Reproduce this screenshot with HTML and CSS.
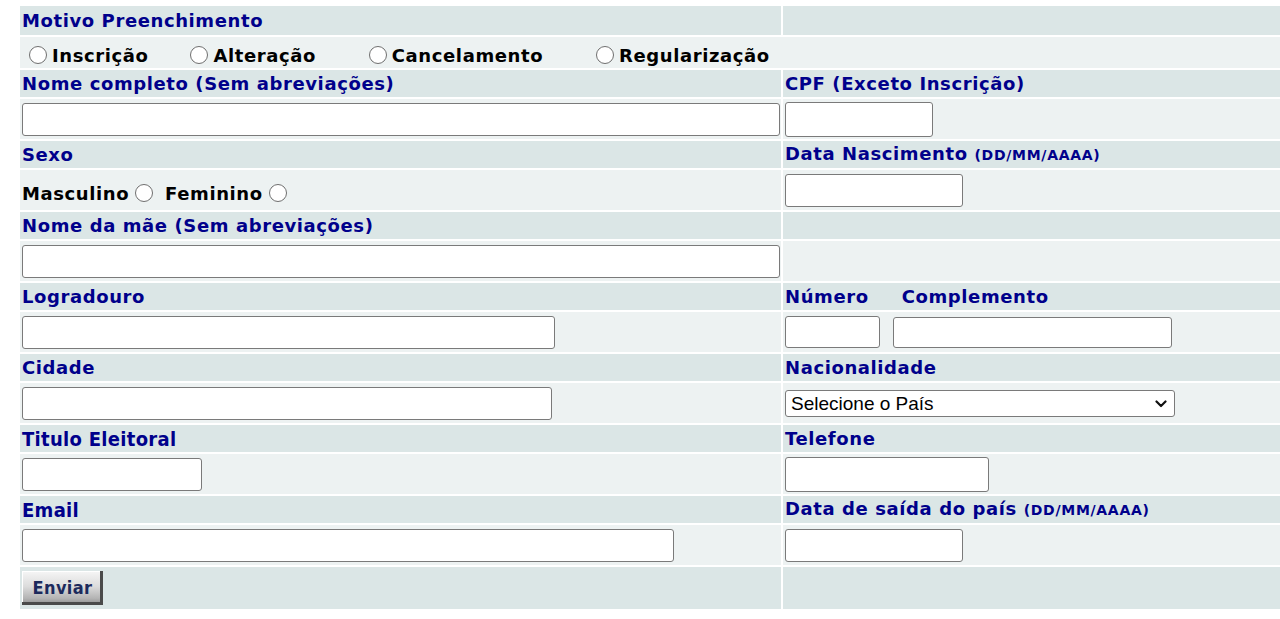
FILE: index.html
```html
<!DOCTYPE html>
<html lang="pt-BR">
<head>
<meta charset="utf-8">
<title>Motivo Preenchimento</title>
<link rel="stylesheet" href="styles.css">
</head>
<body>
<form class="cadastro">
<table class="form-table">
    <tr class="head first">
        <td class="left">Motivo Preenchimento</td>
        <td></td>
    </tr>
    <tr class="field motivo">
        <td colspan="2">
            <label class="opt"><input type="radio" name="motivo" value="inscricao">Inscrição</label>
            <label class="opt opt-2"><input type="radio" name="motivo" value="alteracao">Alteração</label>
            <label class="opt opt-3"><input type="radio" name="motivo" value="cancelamento">Cancelamento</label>
            <label class="opt opt-3"><input type="radio" name="motivo" value="regularizacao">Regularização</label>
        </td>
    </tr>
    <tr class="head">
        <td class="left">Nome completo (Sem abreviações)</td>
        <td>CPF (Exceto Inscrição)</td>
    </tr>
    <tr class="field">
        <td class="left"><input type="text" class="txt w-full" name="nome"></td>
        <td><input type="text" class="txt w-cpf" name="cpf"></td>
    </tr>
    <tr class="head">
        <td class="left">Sexo</td>
        <td>Data Nascimento <small>(DD/MM/AAAA)</small></td>
    </tr>
    <tr class="field">
        <td class="left sexo">
            <label>Masculino<input type="radio" name="sexo" value="M"></label>
            <label class="fem">Feminino<input type="radio" name="sexo" value="F"></label>
        </td>
        <td><input type="text" class="txt w-date" name="nascimento"></td>
    </tr>
    <tr class="head">
        <td class="left">Nome da mãe (Sem abreviações)</td>
        <td></td>
    </tr>
    <tr class="field">
        <td class="left"><input type="text" class="txt w-full" name="mae"></td>
        <td></td>
    </tr>
    <tr class="head">
        <td class="left">Logradouro</td>
        <td><span class="num-label">Número</span>Complemento</td>
    </tr>
    <tr class="field">
        <td class="left"><input type="text" class="txt w-logr" name="logradouro"></td>
        <td>
            <div class="pair">
                <input type="text" class="txt w-num" name="numero">
                <input type="text" class="txt w-compl" name="complemento">
            </div>
        </td>
    </tr>
    <tr class="head">
        <td class="left">Cidade</td>
        <td>Nacionalidade</td>
    </tr>
    <tr class="field">
        <td class="left"><input type="text" class="txt w-cidade" name="cidade"></td>
        <td>
            <span class="select-wrap">
                <select name="nacionalidade" class="pais">
                    <option>Selecione o País</option>
                    <option>Brasil</option>
                    <option>Portugal</option>
                </select>
                <svg class="chevron" width="12" height="8" viewBox="0 0 12 8"><path d="M1.5 1.5 L6 6 L10.5 1.5" fill="none" stroke="#111" stroke-width="2.2" stroke-linecap="round" stroke-linejoin="round"/></svg>
            </span>
        </td>
    </tr>
    <tr class="head">
        <td class="left cond">Titulo Eleitoral</td>
        <td>Telefone</td>
    </tr>
    <tr class="field">
        <td class="left"><input type="text" class="txt w-titulo" name="titulo"></td>
        <td><input type="text" class="txt w-fone" name="telefone"></td>
    </tr>
    <tr class="head">
        <td class="left cond">Email</td>
        <td>Data de saída do país <small>(DD/MM/AAAA)</small></td>
    </tr>
    <tr class="field">
        <td class="left"><input type="text" class="txt w-email" name="email"></td>
        <td><input type="text" class="txt w-date" name="saida"></td>
    </tr>
    <tr class="head last">
        <td class="left"><button type="submit" class="enviar">Enviar</button></td>
        <td></td>
    </tr>
</table>
</form>
</body>
</html>
```

FILE: styles.css
```css
html, body {
    overflow: hidden;
}
body {
    margin: 4px 0 0 18px;
    background-color: #fff;
    font-family: "DejaVu Sans", Verdana, sans-serif;
    font-size: 18px;
    font-weight: bold;
    letter-spacing: 0.6px;
}
.form-table {
    border-spacing: 2px;
    width: 1266px;
}
.form-table td {
    box-sizing: border-box;
    padding: 0 0 0 2px;
    vertical-align: middle;
    white-space: nowrap;
    line-height: 20px;
}
.form-table td.left {
    width: 761px;
}
.head td {
    height: 27px;
    background-color: #dbe6e6;
    color: #00008b;
}
.head.first td {
    height: 29px;
}
.head.last td {
    height: 42px;
}
.field td {
    height: 40px;
    background-color: #edf2f2;
    color: #000;
}
.motivo td {
    height: 31px;
    padding-top: 6px;
}
small {
    font-size: 14px;
    letter-spacing: 0.7px;
}
.cond {
    font-family: "DejaVu Sans Condensed", "DejaVu Sans", sans-serif;
    font-stretch: condensed;
    font-size: 20px;
    letter-spacing: 0.3px;
}
.num-label {
    margin-right: 33px;
}

/* radios */
input[type="radio"] {
    -webkit-appearance: none;
    appearance: none;
    width: 18px;
    height: 18px;
    margin: 0 5px 0 0;
    border: 1px solid #6f6f6f;
    border-radius: 50%;
    background: #fff;
    vertical-align: -2px;
}
input[type="radio"]:checked {
    background: radial-gradient(circle, #333 35%, #fff 40%);
}
.opt {
    margin-left: 7px;
}
.opt-2 {
    margin-left: 35px;
}
.opt-3 {
    margin-left: 46px;
}
.form-table td.sexo {
    padding-top: 8px;
}
.sexo label input {
    margin: 0 0 0 6px;
}
.sexo .fem {
    margin-left: 5px;
}

/* text boxes */
.txt {
    box-sizing: border-box;
    height: 33px;
    margin: 0;
    border: 1px solid #7a7a7a;
    border-radius: 3px;
    background: #fff;
    font-size: 15px;
    vertical-align: middle;
}
.w-full { width: 758px; }
.w-cpf { width: 148px; height: 35px; }
.w-date { width: 178px; }
.w-logr { width: 533px; }
.w-cidade { width: 530px; }
.w-num { width: 95px; height: 32px; }
.w-compl { width: 279px; height: 31px; }
.w-titulo { width: 180px; }
.w-fone { width: 204px; height: 35px; }
.w-email { width: 652px; }
.pair {
    display: flex;
    align-items: center;
    gap: 13px;
}

/* select */
.select-wrap {
    position: relative;
    display: inline-block;
    vertical-align: middle;
}
.pais {
    -webkit-appearance: none;
    appearance: none;
    width: 390px;
    height: 27px;
    margin: 0;
    padding: 0 0 0 5px;
    border: 1px solid #7a7a7a;
    border-radius: 3px;
    background: #fff;
    font-family: "Liberation Sans", Arial, sans-serif;
    font-size: 19px;
    font-weight: normal;
    letter-spacing: 0;
    color: #000;
}
.chevron {
    position: absolute;
    right: 8px;
    top: 10px;
    pointer-events: none;
}

/* botão */
.enviar {
    width: 81px;
    height: 34px;
    margin: 0;
    padding: 0 0 2px;
    border: none;
    background: linear-gradient(#f6f6f6, #dcdcdc 45%, #b4b4b4 80%, #8a8a8a);
    box-shadow: inset -3px -3px 0 #4a4a4a, inset 1px 1px 0 #fff;
    font-family: "DejaVu Sans Condensed", "DejaVu Sans", sans-serif;
    font-stretch: condensed;
    font-size: 18px;
    font-weight: bold;
    letter-spacing: 0.4px;
    color: #1c2a5c;
    cursor: pointer;
    vertical-align: middle;
}
```
